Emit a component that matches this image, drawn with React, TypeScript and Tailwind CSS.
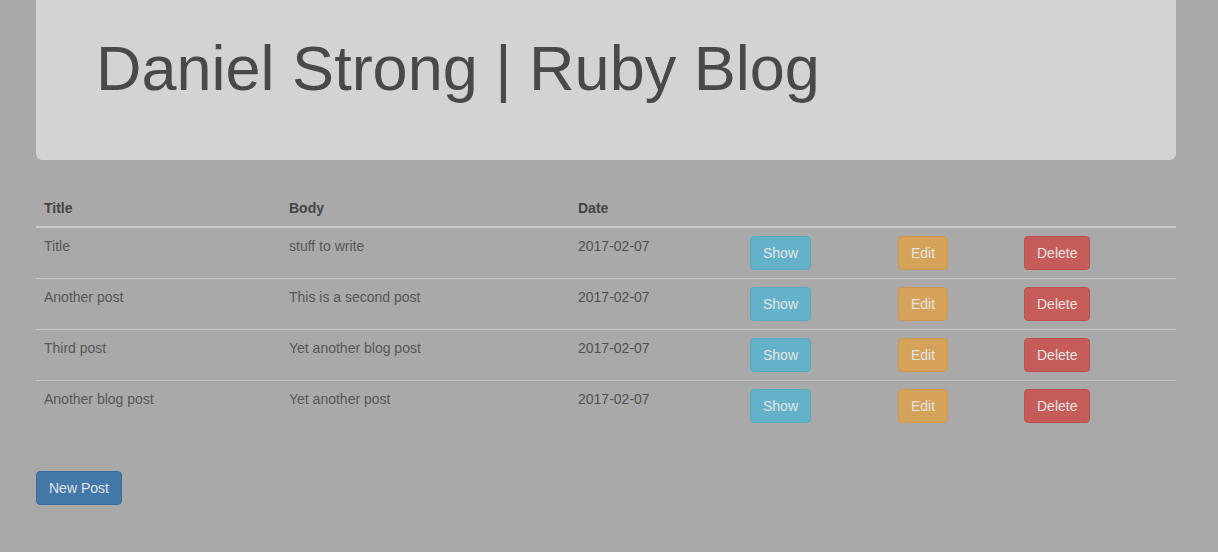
const posts = [
  { title: "Title", body: "stuff to write", date: "2017-02-07" },
  { title: "Another post", body: "This is a second post", date: "2017-02-07" },
  { title: "Third post", body: "Yet another blog post", date: "2017-02-07" },
  { title: "Another blog post", body: "Yet another post", date: "2017-02-07" },
];

export default function App() {
  return (
    <div className="min-h-[552px] w-full bg-[#a9a9a9] font-['Liberation_Sans',Arial,sans-serif] text-[14px] leading-[20px] text-[#575757]">
      <div className="ml-[36px] w-[1140px]">
        {/* Jumbotron */}
        <div className="mb-[30px] h-[160px] rounded-b-[6px] bg-[#d3d3d3] px-[60px] pt-[34px]">
          <h1 className="text-[63px] leading-[69px] font-normal text-[#494949]">
            Daniel Strong | Ruby Blog
          </h1>
        </div>

        {/* Posts table */}
        <table className="mb-[40px] w-full table-fixed border-collapse">
          <thead>
            <tr className="border-b-2 border-[#c9c9c9] text-left">
              <th className="w-[245px] p-2 font-bold text-[#454545]">Title</th>
              <th className="w-[289px] p-2 font-bold text-[#454545]">Body</th>
              <th className="w-[172px] p-2 font-bold text-[#454545]">Date</th>
              <th className="w-[148px] p-2"></th>
              <th className="w-[126px] p-2"></th>
              <th className="p-2"></th>
            </tr>
          </thead>
          <tbody>
            {posts.map((post, i) => (
              <tr key={i} className={i > 0 ? "border-t border-[#c4c4c4] align-top" : "align-top"}>
                <td className="p-2">{post.title}</td>
                <td className="p-2">{post.body}</td>
                <td className="p-2 text-[#505050]">{post.date}</td>
                <td className="p-2">
                  <button className="h-[34px] rounded-[4px] border border-[#5aa9c0] bg-[#63b2c9] px-3 text-[#e4e4e4]">
                    Show
                  </button>
                </td>
                <td className="p-2">
                  <button className="h-[34px] rounded-[4px] border border-[#cd9a50] bg-[#d5a259] px-3 text-[#e4e4e4]">
                    Edit
                  </button>
                </td>
                <td className="p-2">
                  <button className="h-[34px] rounded-[4px] border border-[#ba5350] bg-[#c65c59] px-3 text-[#e4e4e4]">
                    Delete
                  </button>
                </td>
              </tr>
            ))}
          </tbody>
        </table>

        <button className="h-[34px] rounded-[4px] border border-[#3c6c99] bg-[#4378a9] px-3 text-[#e4e4e4]">
          New Post
        </button>
      </div>
    </div>
  );
}
